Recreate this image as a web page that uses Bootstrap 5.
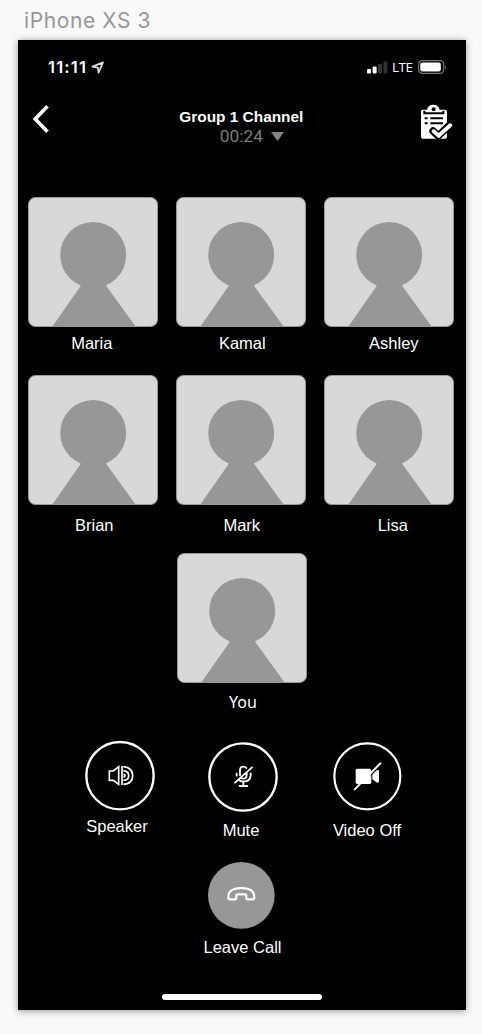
<!DOCTYPE html>
<html lang="en">
<head>
<meta charset="utf-8">
<meta name="viewport" content="width=device-width, initial-scale=1">
<title>Group 1 Channel</title>
<link href="https://cdn.jsdelivr.net/npm/bootstrap@5.3.0/dist/css/bootstrap.min.css" rel="stylesheet">
<style>
body{background:#f9f9f9;font-family:"Liberation Sans",Arial,sans-serif;font-size:16.5px;line-height:20px;height:1034px;overflow:hidden}
svg{display:block;flex:none;overflow:visible}
.artboard-name{height:40px;padding:7px 0 0 24px;font:400 21px/28px Inter,sans-serif;letter-spacing:.6px;color:#979797}
.phone{width:448px;height:970px;margin-left:18px;box-shadow:0 1px 7px rgba(0,0,0,.4)}
.status-bar{height:54px;padding:17px 20px 0 30px;font-family:Inter,sans-serif}
.clock{font-size:16.5px;font-weight:600;width:43px;letter-spacing:1.2px}
.lte{font:400 13.5px/20px "Open Sans",sans-serif;width:20px;letter-spacing:-.5px;margin:0 6px 0 4px}
.call-head{height:103px;padding:10px 14px 0 14px}
.call-title{font-size:15.4px;line-height:20px;padding-top:3px}
.call-name{padding-left:14px}
.timer{font:400 17.3px/20px Roboto,sans-serif;color:#7c7c7c;gap:8px;padding-left:21px;margin-top:-1px}
.people{gap:18px;height:178px}
.tile-pic{width:130px;height:130px}
.person{width:130px}
.first-row .person-name{margin-top:6px}
.second-row .person-name{margin-top:10px}
.self-row .person-name{margin-top:9px;font-family:"Noto Sans",sans-serif;font-size:16px}
.self-row{padding-left:.8px;height:187px}
.controls{height:122px;padding:1px 38px 0 40px}
.control{width:124px;flex:none}
.nudge-l1{padding-right:2px}.nudge-l3{padding-right:3px}
.nudge-r1{padding-left:1px}.nudge-r2{padding-left:2px}.nudge-r7{padding-left:7px}.nudge-r9{padding-left:9px}
.nudge-l6{padding-right:6px}
.home-bar{width:160px;height:6px;border-radius:3px;margin:0 auto 10px}
</style>
</head>
<body>
<svg width="0" height="0" class="position-absolute">
  <symbol id="avatar" viewBox="0 0 130 130">
    <rect x=".5" y=".5" width="129" height="129" rx="7" fill="#d8d8d8" stroke="#979797"/>
    <circle cx="65.2" cy="58" r="33" fill="#979797"/>
    <path d="M65.2 71L108 130H24z" fill="#979797"/>
  </symbol>
</svg>
<div class="artboard-name">iPhone XS 3</div>
<main class="phone bg-black text-white d-flex flex-column">
  <div class="status-bar d-flex align-items-start">
    <span class="clock">11:11</span>
    <svg class="mt-1" width="14" height="14" viewBox="0 0 14 14"><path d="M1.5 5.6L12 1.4 7.6 11.6 6.9 6.6z" fill="none" stroke="#ddd" stroke-width="1.7" stroke-linejoin="round"/></svg>
    <svg class="ms-auto" style="margin-top:4px" width="21" height="13" viewBox="0 0 21 13"><g fill="#fff"><rect y="8" width="4" height="4.5" rx="1"/><rect x="5.6" y="5.5" width="4" height="7" rx="1"/></g><g fill="#333"><rect x="11" y="3" width="4" height="9.5" rx="1"/><rect x="16.4" y=".5" width="4" height="12" rx="1"/></g></svg>
    <span class="lte">LTE</span>
    <svg style="margin-top:3px" width="28" height="14" viewBox="0 0 28 14"><rect x=".7" y=".7" width="25" height="12.6" rx="3.6" fill="none" stroke="#777" stroke-width="1.2"/><rect x="2.3" y="2.4" width="20.5" height="9.2" rx="2" fill="#fff"/><path d="M27.2 5v4q2-2 0-4z" fill="#777"/></svg>
  </div>
  <header class="call-head d-flex justify-content-between align-items-start">
    <svg width="18" height="30" viewBox="0 0 18 30"><path d="M15.5 2.2L3.2 15 15.5 27.7" fill="none" stroke="#fff" stroke-width="3.6"/></svg>
    <div class="call-name text-center">
      <div class="call-title fw-bold">Group 1 Channel</div>
      <div class="timer d-flex justify-content-center align-items-center"><span>00:24</span><svg width="13" height="9" viewBox="0 0 13 9"><path d="M0 0h13L6.5 9z" fill="#858585"/></svg></div>
    </div>
    <svg width="33.3" height="36.7" viewBox="30 26 100 110">
      <path d="M40 43H54Q57 28 73 28T92 43H108Q114 43 114 49V124Q114 130 108 130H42Q36 130 36 124V49Q36 43 40 43z" fill="#fff"/>
      <circle cx="74" cy="42" r="6" fill="#000"/>
      <path d="M46 46V54H103V46M64 69H102M64 84H102M47 69H56M47 84H56" fill="none" stroke="#000" stroke-width="6"/>
      <path d="M72 107L88 122 123 88" fill="none" stroke="#000" stroke-width="22" stroke-linecap="round" stroke-linejoin="round"/>
      <path d="M74 108L89 121 124 90" fill="none" stroke="#fff" stroke-width="12" stroke-linecap="round"/>
    </svg>
  </header>

  <section class="people first-row d-flex justify-content-center text-center" style="padding-right:1.4px">
    <div class="person"><svg class="tile-pic"><use href="#avatar"/></svg><div class="person-name nudge-l3">Maria</div></div>
    <div class="person"><svg class="tile-pic"><use href="#avatar"/></svg><div class="person-name nudge-r2">Kamal</div></div>
    <div class="person"><svg class="tile-pic"><use href="#avatar"/></svg><div class="person-name nudge-r9">Ashley</div></div>
  </section>
  <section class="people second-row d-flex justify-content-center text-center" style="padding-right:1.4px">
    <div class="person"><svg class="tile-pic"><use href="#avatar"/></svg><div class="person-name nudge-r2">Brian</div></div>
    <div class="person"><svg class="tile-pic"><use href="#avatar"/></svg><div class="person-name nudge-r1">Mark</div></div>
    <div class="person"><svg class="tile-pic"><use href="#avatar"/></svg><div class="person-name nudge-r7">Lisa</div></div>
  </section>
  <section class="people self-row d-flex justify-content-center text-center">
    <div class="person"><svg class="tile-pic"><use href="#avatar"/></svg><div class="person-name nudge-r1">You</div></div>
  </section>

  <section class="controls d-flex text-center">
    <div class="control">
      <svg class="mx-auto" width="70" height="70" viewBox="30 33 210 210" fill="none" stroke="#fff" stroke-width="5">
        <circle cx="135" cy="137" r="101" stroke-width="7"/>
        <path d="M103 123H115L131 110V163L115 151H103zM141 108V165"/>
        <path d="M145 110Q173 113 173 137T145 163M145 122Q161 124 161 137T145 151M145 133Q150 133 150 137T145 141" stroke-width="5"/>
      </svg>
      <div class="nudge-l6" style="margin-top:5px">Speaker</div>
    </div>
    <div class="control">
      <svg class="mx-auto" width="70" height="70" viewBox="42 33 210 210" fill="none" stroke="#fff" stroke-width="5.5" stroke-linecap="round">
        <circle cx="144" cy="141" r="101" stroke-width="7"/>
        <path d="M135 136V120Q135 110 145 110Q151 110 154 114M155 128V135Q155 146 145 146Q141 146 138 144M125 131V137M167 130V136Q166 154 145 155Q138 155 133 151M145 155V168M134 168H157M171 112L120 158"/>
      </svg>
      <div class="nudge-l6" style="margin-top:9px">Mute</div>
    </div>
    <div class="control">
      <svg class="mx-auto" width="70" height="70" viewBox="39 33 210 210">
        <circle cx="142" cy="139" r="99" fill="none" stroke="#fff" stroke-width="6.5"/>
        <rect x="107" y="116" width="47" height="46" rx="5" fill="#fff"/><path d="M157 132L169 121Q177 118 177 124V154Q177 160 169 157L157 148z" fill="#fff"/>
        <path d="M181 100L104 178" stroke="#fff" stroke-width="6" stroke-linecap="round"/><path d="M184 105L152 137" stroke="#000" stroke-width="3"/>
      </svg>
      <div class="nudge-l1" style="margin-top:9px">Video Off</div>
    </div>
  </section>
  <section class="text-center">
    <svg class="mx-auto" width="70" height="74" viewBox="51 21 210 222">
      <circle cx="154" cy="121" r="100" fill="#979797"/>
      <path d="M115 128Q114 109 131 103Q153 96 177 103Q193 108 193 128Q193 133 188 133H173Q169 133 169 128V121Q169 118 165 118H143Q139 118 139 121V128Q139 133 135 133H120Q115 133 115 128z" fill="none" stroke="#fff" stroke-width="6.5" stroke-linejoin="round"/>
    </svg>
    <div class="nudge-r1" style="margin-top:1px">Leave Call</div>
  </section>
  <div class="home-bar bg-white mt-auto"></div>
</main>
<script src="https://cdn.jsdelivr.net/npm/bootstrap@5.3.0/dist/js/bootstrap.bundle.min.js"></script>
</body>
</html>
